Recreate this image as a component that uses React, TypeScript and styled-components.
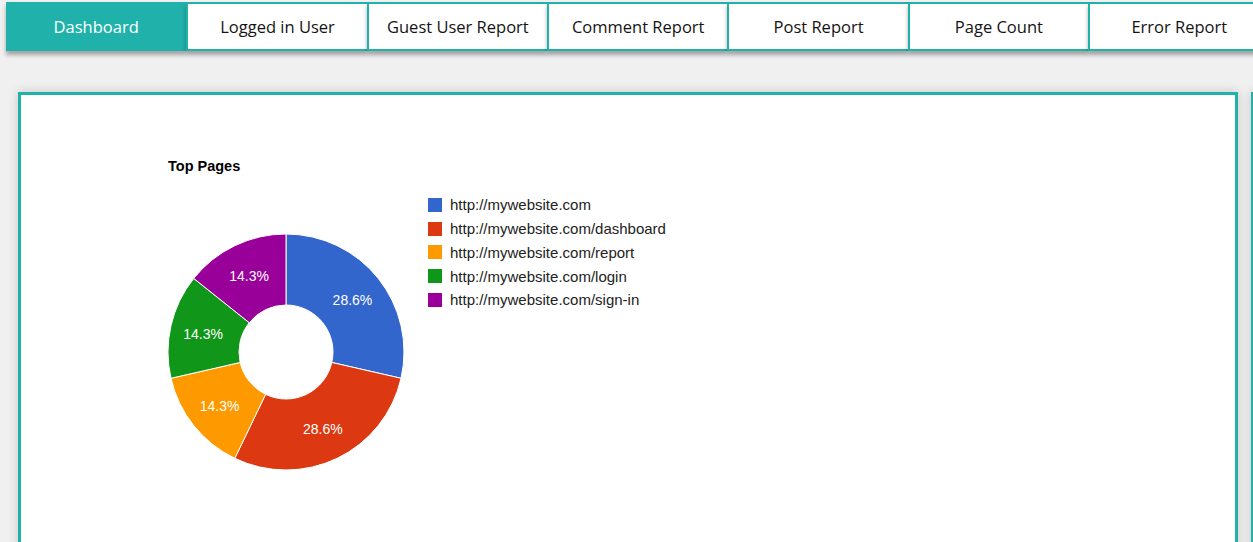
import React from 'react';
import styled, { createGlobalStyle } from 'styled-components';

const TEAL = '#20b2aa';

const GlobalStyle = createGlobalStyle`
  html, body {
    margin: 0;
    padding: 0;
    background: #f0f0f0;
    overflow: hidden;
  }
`;

const Page = styled.div`
  width: 1253px;
  height: 542px;
  overflow: hidden;
`;

const TabBar = styled.nav`
  display: flex;
  margin: 2px 0 0 6px;
  width: 1400px;
`;

const Tab = styled.div<{ $active?: boolean }>`
  flex: 0 0 180.35px;
  box-sizing: border-box;
  height: 49px;
  display: flex;
  align-items: center;
  justify-content: center;
  font-family: "Open Sans", "Noto Sans", sans-serif;
  font-size: 16.5px;
  color: ${p => (p.$active ? '#ffffff' : '#141414')};
  background: ${p => (p.$active ? TEAL : '#ffffff')};
  border-top: 2px solid ${TEAL};
  border-bottom: 2px solid ${TEAL};
  border-left: ${p => (p.$active ? '0' : `2px solid ${TEAL}`)};
  box-shadow: 0 4px 4px rgba(0, 0, 0, 0.32);
`;

const CardRow = styled.div`
  display: flex;
  gap: 13px;
  margin-top: 41px;
  padding-left: 18px;
  width: 2600px;
`;

const Card = styled.section`
  flex: 0 0 1220px;
  box-sizing: border-box;
  height: 520px;
  background: #ffffff;
  border: 3px solid ${TEAL};
  box-shadow: 0 0 10px rgba(0, 0, 0, 0.18);
  padding: 63px 0 0 144px;
`;

const ChartTitle = styled.div`
  font-family: "Liberation Sans", Arial, sans-serif;
  font-weight: bold;
  font-size: 14.5px;
  line-height: 17px;
  color: #000;
  padding-left: 3px;
`;

const ChartRow = styled.div`
  display: flex;
  align-items: flex-start;
  margin-top: 18px;
`;

const PieBox = styled.svg`
  display: block;
  margin-top: 38px;
  flex: 0 0 auto;
`;

const Legend = styled.ul`
  list-style: none;
  margin: 0 0 0 21px;
  padding: 0;
`;

const LegendItem = styled.li`
  display: flex;
  align-items: center;
  height: 23.75px;
  font-family: "Liberation Sans", Arial, sans-serif;
  font-size: 15px;
  color: #222;
`;

const Swatch = styled.span<{ $color: string }>`
  width: 14px;
  height: 14px;
  margin-right: 8px;
  background: ${p => p.$color};
  flex: 0 0 auto;
`;

const slices = [
  { label: 'http://mywebsite.com', value: 2, color: '#3366cc' },
  { label: 'http://mywebsite.com/dashboard', value: 2, color: '#dc3912' },
  { label: 'http://mywebsite.com/report', value: 1, color: '#ff9900' },
  { label: 'http://mywebsite.com/login', value: 1, color: '#109618' },
  { label: 'http://mywebsite.com/sign-in', value: 1, color: '#990099' },
];

const CX = 121;
const CY = 121;
const R_OUT = 118;
const R_IN = 47;
const R_LABEL = 85;

const pt = (r: number, deg: number) => {
  const a = (deg * Math.PI) / 180;
  return [CX + r * Math.sin(a), CY - r * Math.cos(a)];
};

const slicePath = (from: number, to: number) => {
  const large = to - from > 180 ? 1 : 0;
  const [x1, y1] = pt(R_OUT, from);
  const [x2, y2] = pt(R_OUT, to);
  const [x3, y3] = pt(R_IN, to);
  const [x4, y4] = pt(R_IN, from);
  return `M${x1} ${y1} A${R_OUT} ${R_OUT} 0 ${large} 1 ${x2} ${y2} L${x3} ${y3} A${R_IN} ${R_IN} 0 ${large} 0 ${x4} ${y4} Z`;
};

const Donut = () => {
  const total = slices.reduce((s, x) => s + x.value, 0);
  let start = 0;
  return (
    <PieBox width={242} height={242} viewBox="0 0 242 242">
      {slices.map(s => {
        const sweep = (s.value / total) * 360;
        const from = start;
        const to = start + sweep;
        start = to;
        const [lx, ly] = pt(R_LABEL, from + sweep / 2);
        const pct = ((s.value / total) * 100).toFixed(1) + '%';
        return (
          <g key={s.label}>
            <path d={slicePath(from, to)} fill={s.color} stroke="#fff" strokeWidth={1} />
            <text
              x={lx}
              y={ly + 1}
              dy="0.35em"
              textAnchor="middle"
              fill="#fff"
              fontFamily='"Liberation Sans", Arial, sans-serif'
              fontSize="14"
            >
              {pct}
            </text>
          </g>
        );
      })}
    </PieBox>
  );
};

const tabs = ['Dashboard', 'Logged in User', 'Guest User Report', 'Comment Report', 'Post Report', 'Page Count', 'Error Report'];

const App = () => (
  <Page>
    <GlobalStyle />
    <TabBar>
      {tabs.map((t, i) => (
        <Tab key={t} $active={i === 0}>{t}</Tab>
      ))}
    </TabBar>
    <CardRow>
      <Card>
        <ChartTitle>Top Pages</ChartTitle>
        <ChartRow>
          <Donut />
          <Legend>
            {slices.map(s => (
              <LegendItem key={s.label}>
                <Swatch $color={s.color} />
                {s.label}
              </LegendItem>
            ))}
          </Legend>
        </ChartRow>
      </Card>
      <Card />
    </CardRow>
  </Page>
);

export default App;
